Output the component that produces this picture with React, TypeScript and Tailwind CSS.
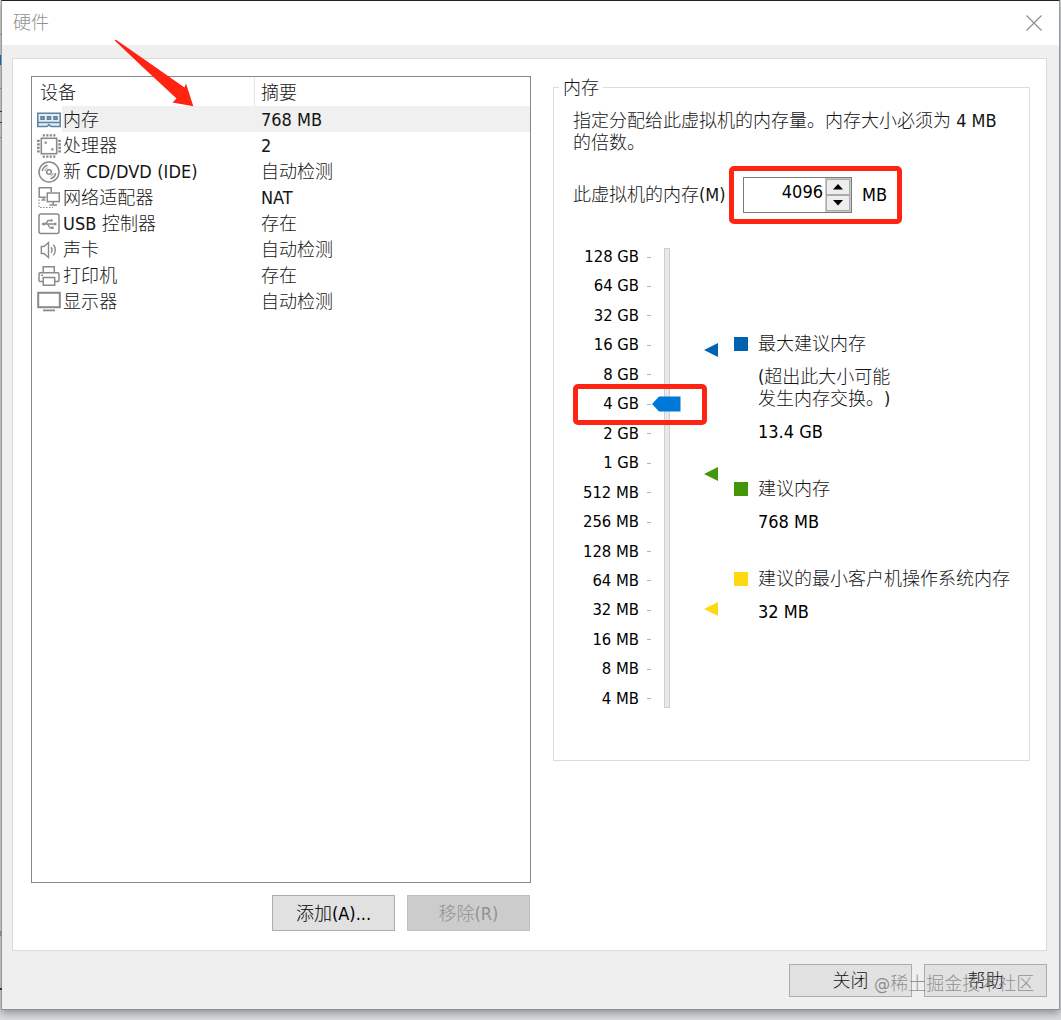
import type { ReactNode } from 'react';

type Device = {
  name: string;
  summary: string;
  icon: ReactNode;
  selected?: boolean;
};

const MemoryIcon = () => (
  <svg width="24" height="18" viewBox="0 0 24 18" fill="none" stroke="#5f819e" strokeWidth="1.5">
    <path d="M0.8 2.2H23.2V15.6H14.2L12 13.8L9.8 15.6H0.8Z" fill="#e3edf5" />
    <path d="M1 11.5H23" />
    <path d="M4 5.7H7V8.3H4ZM10.5 5.7H13.5V8.3H10.5ZM17 5.7H20V8.3H17Z" fill="#9db4c8" />
  </svg>
);

const CpuIcon = () => (
  <svg width="24" height="24" viewBox="0 0 24 24" fill="none" stroke="#8a8a8a">
    <rect x="4.3" y="4.3" width="15.4" height="15.4" strokeWidth="1.6" />
    <path d="M5.7 1.4H19M5.7 22.6H19" strokeWidth="2.4" strokeDasharray="2.2 1.3" />
    <path d="M1.4 5.7V19M22.6 5.7V19" strokeWidth="2.6" strokeDasharray="2.2 1.3" />
    <path d="M7.5 7.5h2.2v2.2h-2.2zM14.3 14.3h2.2v2.2h-2.2z" fill="#8a8a8a" stroke="none" />
  </svg>
);

const DiscIcon = () => (
  <svg width="24" height="24" viewBox="0 0 24 24" fill="none" stroke="#8a8a8a" strokeWidth="1.5">
    <circle cx="12" cy="12" r="10" />
    <circle cx="12" cy="12" r="2.3" />
    <path d="M5.3 11C5.8 8.3 7.8 6 10.6 5.3M18.7 13C18.2 15.7 16.2 18 13.4 18.7" />
    <path d="M7.8 10.8C8.2 9.4 9.2 8.3 10.5 7.9M16.2 13.2C15.8 14.6 14.8 15.7 13.5 16.1" strokeWidth="1" />
  </svg>
);

const NetworkIcon = () => (
  <svg width="24" height="24" viewBox="0 0 24 24" fill="none" stroke="#8a8a8a" strokeWidth="1.5">
    <path d="M9 11.2H2.2V1.8H14.2V6" />
    <rect x="10.3" y="7" width="12" height="8.6" />
    <path d="M6.5 11.5V13.7M4.5 14H8.5M16.2 16V18.8M12.5 19H20" />
    <path d="M2 13.5V21.5H16" strokeDasharray="1.5 1.5" strokeWidth="1.2" />
  </svg>
);

const UsbIcon = () => (
  <svg width="24" height="24" viewBox="0 0 24 24" fill="none" stroke="#8a8a8a" strokeWidth="1.3">
    <rect x="2" y="2" width="20" height="19.6" rx="2" strokeWidth="1.5" />
    <path d="M6 12H18M8.5 12L11 8.5H13.5M10.5 12L13 15.8H15" />
    <path d="M4.2 12L7.5 10V14Z" fill="#8a8a8a" stroke="none" />
    <circle cx="14.5" cy="8.5" r="1.2" fill="#8a8a8a" stroke="none" />
    <path d="M14.2 14.6h2.4v2.4h-2.4zM17 10.8h2.4v2.4H17z" fill="#8a8a8a" stroke="none" />
  </svg>
);

const SoundIcon = () => (
  <svg width="24" height="24" viewBox="0 0 24 24" fill="none" stroke="#8a8a8a" strokeWidth="1.4">
    <path d="M4.3 8.5H7L11.5 4.5V19.5L7 15.5H4.3Z" />
    <path d="M14 9.2C15.3 10.8 15.3 13.2 14 14.8M16.3 6.8C19 9.5 19 14.5 16.3 17.2" />
  </svg>
);

const PrinterIcon = () => (
  <svg width="24" height="24" viewBox="0 0 24 24" fill="none" stroke="#8a8a8a" strokeWidth="1.5">
    <path d="M6.2 8.5V2.7H17.3V8.5" />
    <path d="M6 17.5H3.2Q2 17.5 2 16.3V10Q2 8.8 3.2 8.8H20.8Q22 8.8 22 10V16.3Q22 17.5 20.8 17.5H18" />
    <rect x="6.2" y="13.5" width="11.5" height="7.7" />
    <path d="M4.3 11.3H6" />
  </svg>
);

const DisplayIcon = () => (
  <svg width="24" height="24" viewBox="0 0 24 24" fill="none" stroke="#8a8a8a" strokeWidth="2">
    <rect x="1.2" y="2.8" width="21.6" height="14.4" />
    <path d="M6 20.4H18" strokeWidth="1.8" />
  </svg>
);

const devices: Device[] = [
  { name: '内存', summary: '768 MB', icon: <MemoryIcon />, selected: true },
  { name: '处理器', summary: '2', icon: <CpuIcon /> },
  { name: '新 CD/DVD (IDE)', summary: '自动检测', icon: <DiscIcon /> },
  { name: '网络适配器', summary: 'NAT', icon: <NetworkIcon /> },
  { name: 'USB 控制器', summary: '存在', icon: <UsbIcon /> },
  { name: '声卡', summary: '自动检测', icon: <SoundIcon /> },
  { name: '打印机', summary: '存在', icon: <PrinterIcon /> },
  { name: '显示器', summary: '自动检测', icon: <DisplayIcon /> },
];

const sizes = [
  '128 GB', '64 GB', '32 GB', '16 GB', '8 GB', '4 GB', '2 GB', '1 GB',
  '512 MB', '256 MB', '128 MB', '64 MB', '32 MB', '16 MB', '8 MB', '4 MB',
];

function DeviceList() {
  return (
    <div className="h-[807px] w-[500px] border border-[#828790] bg-white">
      <div className="flex h-[29px] items-center">
        <div className="flex h-full w-[223px] items-center border-r border-[#e5e5e5] pt-[3px] pl-2">设备</div>
        <div className="pt-[3px] pl-[6px]">摘要</div>
      </div>
      {devices.map(d => (
        <div key={d.name} className="flex h-[26px] items-center">
          <div className="flex w-[30px] shrink-0 justify-end pt-px pr-px">{d.icon}</div>
          <div className={`flex h-full flex-1 items-center pt-[2px] ${d.selected ? 'bg-[#f0f0f0]' : ''}`}>
            <span className="w-[197px] pl-px tracking-[0.1px]">{d.name}</span>
            <span className="pl-[2px]">{d.summary}</span>
          </div>
        </div>
      ))}
    </div>
  );
}

function Spinner() {
  return (
    <div className="flex h-[36px] w-[109px] border border-[#7a7a7a] bg-white">
      <span className="flex-1 pt-[3px] pr-[2px] text-right text-black">4096</span>
      <div className="flex w-[26px] flex-col border border-[#c8c8c8] bg-white">
        <div className="flex flex-1 items-center justify-center border border-[#ababab] bg-[#eeeeee]">
          <svg width="10" height="6"><path d="M5 0L10 5.5H0Z" /></svg>
        </div>
        <div className="flex flex-1 items-center justify-center border border-[#ababab] bg-[#eeeeee]">
          <svg width="10" height="6"><path d="M0 0H10L5 5.5Z" /></svg>
        </div>
      </div>
    </div>
  );
}

function MemoryScale() {
  return (
    <div className="flex">
      <div className="flex h-[462px] w-[78px] flex-col justify-between">
        {sizes.map(s => (
          <div key={s} className="flex h-5 items-center justify-end text-[16.5px] text-black">
            <span>{s}</span>
            <span className="ml-2 h-px w-[4px] bg-[#b5b5b5]" />
          </div>
        ))}
      </div>
      <div className="relative mt-px ml-[13px] h-[460px] w-[6px] border border-[#d0d0d0] bg-[#e7eaea]">
        <svg className="absolute top-[147px] left-[-13px] max-w-none" width="29" height="16">
          <path d="M0 8L7 0.5H28.5V15.5H7Z" fill="#0078d7" />
        </svg>
      </div>
      {/* Recommendation markers next to the track */}
      <svg className="ml-[34px]" width="15" height="462">
        <path d="M0 103L14 96V110Z" fill="#0063b1" />
        <path d="M0 227L14 220V234Z" fill="#439608" />
        <path d="M0 362L14 355V369Z" fill="#ffd90f" />
      </svg>
    </div>
  );
}

function Legend() {
  return (
    <div className="flex flex-col pt-[86px] pl-[15px] leading-[22px] whitespace-nowrap">
      <div className="flex h-[22px] items-center">
        <span className="mr-[10px] h-[14px] w-[14px] bg-[#0063b1]" />
        最大建议内存
      </div>
      <div className="mt-[11px] pl-6 [text-spacing-trim:space-all]">(超出此大小可能<br />发生内存交换。)</div>
      <div className="mt-[11px] pl-6 text-black">13.4 GB</div>
      <div className="mt-[35px] flex h-[22px] items-center">
        <span className="mr-[10px] h-[14px] w-[14px] bg-[#439608]" />
        建议内存
      </div>
      <div className="mt-[11px] pl-6 text-black">768 MB</div>
      <div className="mt-[35px] flex h-[22px] items-center">
        <span className="mr-[10px] h-[14px] w-[14px] bg-[#ffd90f]" />
        建议的最小客户机操作系统内存
      </div>
      <div className="mt-[11px] pl-6 text-black">32 MB</div>
    </div>
  );
}

function MemoryGroup() {
  return (
    <fieldset className="h-[685px] w-[477px] border border-[#dcdcdc] pl-[19px]">
      <legend className="-ml-[14px] h-[22px] px-[4px] pt-px leading-[22px]">内存</legend>
      <p className="mt-[12px] leading-[22px] whitespace-nowrap">
        指定分配给此虚拟机的内存量。内存大小必须为 4 MB<br />的倍数。
      </p>
      <div className="mt-[22px] flex h-[38px] items-center">
        <span className="w-[170px] whitespace-nowrap">此虚拟机的内存(M)</span>
        <Spinner />
        <span className="pl-[10px] text-black">MB</span>
      </div>
      <div className="mt-[33px] flex">
        <MemoryScale />
        <Legend />
      </div>
    </fieldset>
  );
}

export default function App() {
  return (
    <div className="relative h-[1020px] w-[1061px] overflow-hidden bg-[#d9dbdc] pl-px font-['DejaVu_Sans_Condensed','Noto_Sans_CJK_SC',sans-serif] text-[18px] leading-[22px] font-light text-[#151515]">
      {/* Slivers of the window behind */}
      <svg className="absolute top-0 left-0" width="3" height="1020">
        <path d="M0 55h1v10h-1z" fill="#0067b8" />
        <path d="M0 111h2v1h-2zM0 122h2v1h-2zM0 988h2v2h-2z" fill="#333333" />
        <path d="M0 34h2v1h-2zM0 88h2v1h-2zM0 137h2v1h-2zM0 931h2v5h-2z" fill="#888888" />
      </svg>

      <div className="flex h-[1010px] w-[1059px] flex-col border border-t-[#222222] border-r-[#999999] border-b-[#8f8f8f] border-l-[#999999] bg-[#efefef] shadow-[0_3px_8px_rgba(0,0,0,0.35)]">
        <div className="flex h-[44px] shrink-0 items-center justify-between bg-white pr-[17px] pl-[11px]">
          <span className="text-[#919191]">硬件</span>
          <svg width="16" height="16" viewBox="0 0 16 16" stroke="#8a8a8a" strokeWidth="1.1">
            <path d="M0.5 0.5L15.5 15.5M15.5 0.5L0.5 15.5" />
          </svg>
        </div>

        <div className="mt-[13px] ml-[10px] flex h-[893px] w-[1035px] shrink-0 border border-[#dcdcdc] bg-white pt-[17px] pl-[18px]">
          <div>
            <DeviceList />
            <div className="mt-3 flex justify-end gap-3 pr-px text-black">
              <button className="h-[36px] w-[123px] border border-[#adadad] bg-[#e1e1e1] pt-[2px]">添加(A)...</button>
              <button className="h-[36px] w-[123px] border border-[#bfbfbf] bg-[#cccccc] pt-[2px] text-[#929292]">移除(R)</button>
            </div>
          </div>
          <div className="ml-[22px]">
            <MemoryGroup />
          </div>
        </div>

        <div className="mt-[13px] flex justify-end gap-3 pr-[12px]">
          <button className="h-[33px] w-[123px] border border-[#adadad] bg-[#e1e1e1]">关闭</button>
          <button className="h-[33px] w-[123px] border border-[#adadad] bg-[#e1e1e1]">帮助</button>
        </div>
      </div>

      {/* Annotations */}
      <svg className="absolute top-[39px] left-[114px]" width="80" height="68">
        <path d="M0.5 1.2L2 0.8L29 19.5L70.5 48.5L72 44.5L79.3 67.3L58.5 63.5L62.5 59.5L27 26.5Z" fill="#ff2412" />
      </svg>
      <div className="absolute top-[166px] left-[729px] h-[58px] w-[173px] rounded-[5px] border-[5px] border-[#ff2412]" />
      <div className="absolute top-[384px] left-[573px] h-[41px] w-[134px] rounded-[5px] border-[5px] border-[#ff2412]" />
      <span className="absolute top-[973px] left-[874px] text-[18px] whitespace-nowrap text-[#777777]/80">@稀土掘金技术社区</span>
    </div>
  );
}
